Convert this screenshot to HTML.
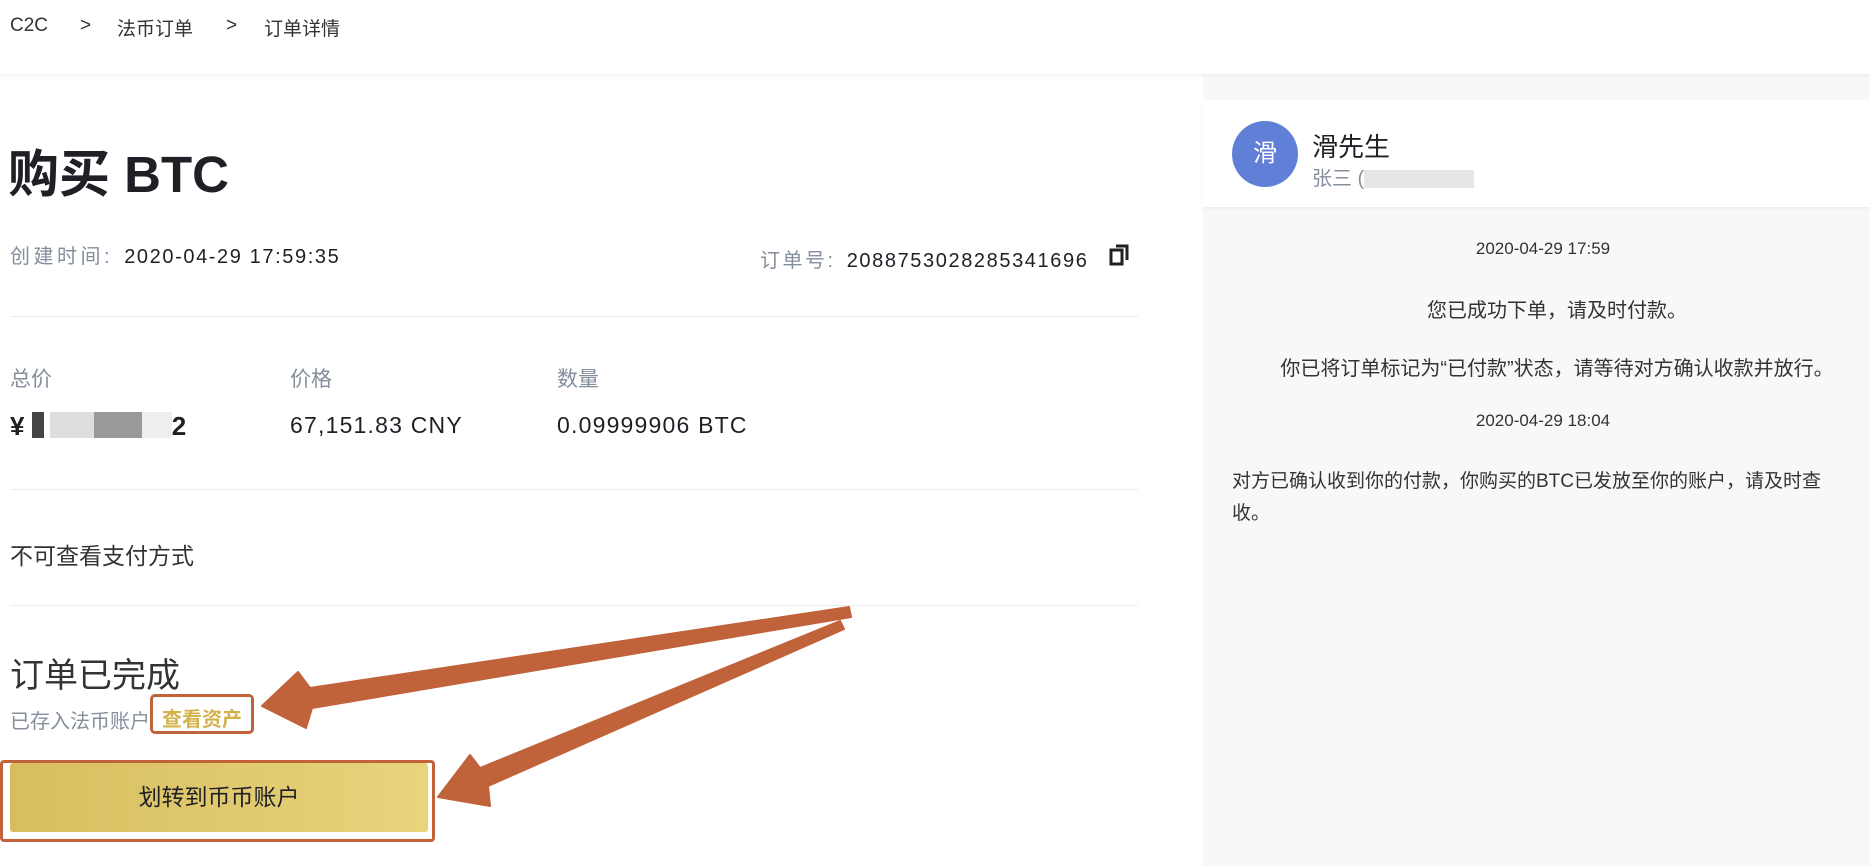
<!DOCTYPE html>
<html><head><meta charset="utf-8"><style>
*{margin:0;padding:0;box-sizing:border-box}
body{width:1870px;height:866px;overflow:hidden;background:#fff;font-family:"Liberation Sans","Noto Sans CJK SC",sans-serif;color:#1e2026;position:relative}
.a{position:absolute;white-space:nowrap}
.top{position:absolute;left:0;top:0;width:1870px;height:74px;background:#fff;box-shadow:0 2px 4px rgba(0,0,0,.05);z-index:2}
.line{position:absolute;left:10px;width:1128px;height:1px;background:#eaecef}
.gray{color:#848e9c}
.num{letter-spacing:1.6px}
.right{position:absolute;left:1203px;top:74px;width:667px;height:792px;background:#f7f8fa}
.hdr{position:absolute;left:1203px;top:100px;width:667px;height:107px;background:#fff;box-shadow:0 2px 4px rgba(0,0,0,.05)}
.msg{position:absolute;font-size:20px;color:#333;white-space:nowrap}
.ctr{left:1257px;width:600px;text-align:center}
.date{font-size:17px;letter-spacing:0;left:1243px}
</style></head><body>
<div class="top">
<div class="a" style="left:10px;top:15px;font-size:19px;color:#333">C2C</div>
<div class="a" style="left:80px;top:15px;font-size:19px;color:#333">&gt;</div>
<div class="a" style="left:117px;top:14px;font-size:19px;color:#333">法币订单</div>
<div class="a" style="left:226px;top:15px;font-size:19px;color:#333">&gt;</div>
<div class="a" style="left:264px;top:14px;font-size:19px;color:#333">订单详情</div>
</div>

<div class="a" style="left:8px;top:145px;font-size:51px;font-weight:bold;line-height:60px">购买 BTC</div>
<div class="a" style="left:10px;top:240px;font-size:20px"><span class="gray" style="letter-spacing:3.5px">创建时间:</span>&nbsp; <span class="num">2020-04-29 17:59:35</span></div>
<div class="a" style="left:760px;top:244px;font-size:20px"><span class="gray" style="letter-spacing:2.5px">订单号:</span>&nbsp; <span class="num">2088753028285341696</span></div>
<svg class="a" style="left:1108px;top:242px" width="24" height="26" viewBox="0 0 24 26"><rect x="3" y="8" width="11" height="14" fill="none" stroke="#1e2026" stroke-width="3"/><path d="M8 4H19V18" fill="none" stroke="#1e2026" stroke-width="3"/></svg>
<div class="line" style="top:316px"></div>
<div class="a gray" style="left:10px;top:363px;font-size:21px">总价</div>
<div class="a gray" style="left:290px;top:363px;font-size:21px">价格</div>
<div class="a gray" style="left:557px;top:363px;font-size:21px">数量</div>
<div class="a" style="left:10px;top:411px;font-size:26px;font-weight:bold">¥ <span style="display:inline-block;width:12px;height:26px;background:#444;vertical-align:-3px"></span><span style="display:inline-block;width:44px;height:26px;background:#ddd;vertical-align:-3px;margin-left:6px"></span><span style="display:inline-block;width:48px;height:26px;background:#999;vertical-align:-3px"></span><span style="display:inline-block;width:30px;height:26px;background:#eee;vertical-align:-3px"></span>2</div>
<div class="a num" style="left:290px;top:412px;font-size:23px;letter-spacing:1.2px">67,151.83 CNY</div>
<div class="a num" style="left:557px;top:412px;font-size:23px;letter-spacing:1.2px">0.09999906 BTC</div>
<div class="line" style="top:489px"></div>
<div class="a" style="left:10px;top:537px;font-size:23px;color:#333">不可查看支付方式</div>
<div class="line" style="top:605px"></div>
<div class="a" style="left:10px;top:648px;font-size:34px;color:#333">订单已完成</div>
<div class="a gray" style="left:10px;top:705px;font-size:20px">已存入法币账户</div>
<div class="a" style="left:150px;top:694px;width:104px;height:40px;border:3px solid #c0623a;border-radius:5px"></div>
<div class="a" style="left:162px;top:703px;font-size:20px;color:#d4b24a;font-weight:bold">查看资产</div>
<div class="a" style="left:0;top:760px;width:435px;height:82px;border:3px solid #c0623a;border-radius:4px"></div>
<div class="a" style="left:10px;top:763px;width:418px;height:69px;background:linear-gradient(90deg,#d7bd5f,#e8d47c);border-radius:3px;text-align:center;line-height:69px;font-size:23px;color:#1e2026">划转到币币账户</div>
<svg class="a" style="left:0;top:0" width="1200" height="866">
<polygon points="849,607 310,688 298,672 262,706 306,728 312,708 851,617" fill="#c0623a" stroke="#c0623a" stroke-width="2" stroke-linejoin="round"/>
<polygon points="840,621 480,768 470,755 438,797 490,806 488,786 844,629" fill="#c0623a" stroke="#c0623a" stroke-width="2" stroke-linejoin="round"/>
</svg>

<div class="right"></div>
<div class="hdr"></div>
<div class="a" style="left:1232px;top:121px;width:66px;height:66px;border-radius:50%;background:#5f80d6;color:#fff;font-size:24px;text-align:center;line-height:66px">滑</div>
<div class="a" style="left:1312px;top:127px;font-size:26px;color:#1e2026">滑先生</div>
<div class="a gray" style="left:1312px;top:162px;font-size:20px">张三 (<span style="display:inline-block;width:110px;height:18px;background:#e6e6e6;vertical-align:-3px"></span></div>
<div class="msg ctr date" style="top:239px">2020-04-29 17:59</div>
<div class="msg ctr" style="top:294px">您已成功下单，请及时付款。</div>
<div class="msg ctr" style="top:352px">你已将订单标记为“已付款”状态，请等待对方确认收款并放行。</div>
<div class="msg ctr date" style="top:411px">2020-04-29 18:04</div>
<div class="msg" style="left:1232px;top:466px;font-size:19px">对方已确认收到你的付款，你购买的BTC已发放至你的账户，请及时查</div>
<div class="msg" style="left:1232px;top:498px;font-size:19px">收。</div>
</body></html>
